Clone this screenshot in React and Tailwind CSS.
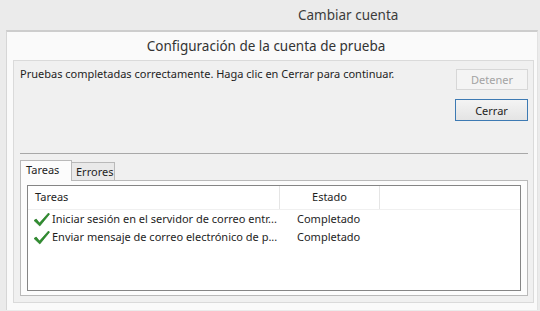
const font = { fontFamily: '"Noto Sans", "Open Sans", sans-serif' };

const Check = () => (
  <svg width="17" height="15" viewBox="0 0 17 15" className="shrink-0">
    <path d="M1 8.5 L3.2 7 L6.5 11 L15.5 1 L16.5 2.2 L6.8 14 Z" fill="#2f8f2f" stroke="#1f6e1f" strokeWidth="0.6" />
  </svg>
);

const filas = [
  { tarea: 'Iniciar sesión en el servidor de correo entr...', estado: 'Completado' },
  { tarea: 'Enviar mensaje de correo electrónico de p...', estado: 'Completado' }
];

export default function App() {
  return (
    <div className="w-[540px] h-[311px] bg-[#ebebeb] overflow-hidden text-[#1e1e1e]" style={font}>
      <div className="h-[30px] pl-[298px] pt-[3px] text-[13.5px] text-[#3c3c3c] leading-[24px]">
        Cambiar cuenta
      </div>

      <div className="ml-[6px] mr-[2px] h-[280px] border-t-2 border-l border-r border-t-[#cdcdcd] border-l-[#d6d6d6] border-r-[#e2e2e2] bg-[#fafafa] flex flex-col">
        <div className="h-[28px] flex items-center justify-center text-[13.5px] text-[#333] pr-[12px]">
          Configuración de la cuenta de prueba
        </div>

        <div className="ml-[6px] mr-[3px] h-[243px] border border-[#dadada] bg-[#f0f0f0] pl-[6px] pr-[5px] flex flex-col text-[11px]">
          <div className="flex justify-between">
            <p className="pt-[5px] leading-[16px]">
              Pruebas completadas correctamente. Haga clic en Cerrar para continuar.
            </p>
            <div className="flex flex-col items-end pt-[8px] gap-[9px]">
              <button className="w-[72px] h-[21px] border border-[#d7d7d7] bg-[#f4f4f4] text-[#a3a3a3] leading-none">
                Detener
              </button>
              <button className="w-[73px] h-[22px] border border-[#3d7ab3] bg-gradient-to-b from-[#f4f4f4] to-[#e4e4e4] text-[#1e1e1e] leading-none">
                Cerrar
              </button>
            </div>
          </div>

          <div className="mt-[32px] h-px bg-[#a8a8a8]" />

          <div className="mt-[6px] flex items-end h-[20px]">
            <div className="w-[52px] h-[21px] -mb-px border border-b-0 border-[#b9b9b9] bg-[#fcfcfc] pl-[5px] pt-[1px] leading-[16px] relative z-10">
              Tareas
            </div>
            <div className="w-[43px] h-[18px] border border-l-0 border-b-0 border-[#b9b9b9] bg-[#e9e9e9] pl-[4px] leading-[17px]">
              Errores
            </div>
          </div>

          <div className="h-[116px] border border-[#b9b9b9] bg-[#fcfcfc] px-[6px] pt-[4px]">
            <div className="h-[106px] border border-[#858585] bg-white">
              <div className="flex h-[24px] border-b border-[#f0f0f0]">
                <div className="w-[252px] pl-[7px] flex items-center border-r border-[#e5e5e5]">Tareas</div>
                <div className="w-[100px] flex items-center justify-center border-r border-[#e5e5e5]">Estado</div>
              </div>
              {filas.map((f) => (
                <div key={f.tarea} className="flex h-[18px] items-center">
                  <div className="w-[252px] pl-[5px] flex items-center gap-[2px] whitespace-nowrap overflow-hidden">
                    <Check />
                    <span>{f.tarea}</span>
                  </div>
                  <div className="w-[100px] pl-[17px]">{f.estado}</div>
                </div>
              ))}
            </div>
          </div>
        </div>
      </div>
    </div>
  );
}
